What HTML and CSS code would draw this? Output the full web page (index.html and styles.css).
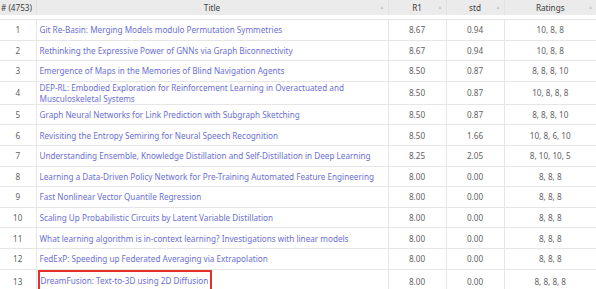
FILE: index.html
```html
<!DOCTYPE html>
<html>
<head>
<meta charset="utf-8">
<link rel="stylesheet" href="styles.css">
</head>
<body>
<table class="grid">
  <colgroup>
    <col class="c-num"><col class="c-title"><col class="c-r1"><col class="c-std"><col class="c-rat">
  </colgroup>
  <thead>
    <tr class="head">
      <th class="h-num">#&nbsp;(4753)</th>
      <th>Title<span class="sort">▲</span></th>
      <th>R1<span class="sort">▲</span></th>
      <th>std<span class="sort">▲</span></th>
      <th>Ratings<span class="sort">▲</span></th>
    </tr>
    <tr class="gap"><td colspan="5"></td></tr>
  </thead>
  <tbody>
    <tr><td>1</td><td class="t"><a>Git Re-Basin: Merging Models modulo Permutation Symmetries</a></td><td>8.67</td><td>0.94</td><td>10, 8, 8</td></tr>
    <tr><td>2</td><td class="t"><a>Rethinking the Expressive Power of GNNs via Graph Biconnectivity</a></td><td>8.67</td><td>0.94</td><td>10, 8, 8</td></tr>
    <tr><td>3</td><td class="t"><a>Emergence of Maps in the Memories of Blind Navigation Agents</a></td><td>8.50</td><td>0.87</td><td>8, 8, 8, 10</td></tr>
    <tr><td>4</td><td class="t"><a>DEP-RL: Embodied Exploration for Reinforcement Learning in Overactuated and Musculoskeletal Systems</a></td><td>8.50</td><td>0.87</td><td>10, 8, 8, 8</td></tr>
    <tr><td>5</td><td class="t"><a>Graph Neural Networks for Link Prediction with Subgraph Sketching</a></td><td>8.50</td><td>0.87</td><td>8, 8, 8, 10</td></tr>
    <tr><td>6</td><td class="t"><a>Revisiting the Entropy Semiring for Neural Speech Recognition</a></td><td>8.50</td><td>1.66</td><td>10, 8, 6, 10</td></tr>
    <tr><td>7</td><td class="t"><a>Understanding Ensemble, Knowledge Distillation and Self-Distillation in Deep Learning</a></td><td>8.25</td><td>2.05</td><td>8, 10, 10, 5</td></tr>
    <tr><td>8</td><td class="t"><a>Learning a Data-Driven Policy Network for Pre-Training Automated Feature Engineering</a></td><td>8.00</td><td>0.00</td><td>8, 8, 8</td></tr>
    <tr><td>9</td><td class="t"><a>Fast Nonlinear Vector Quantile Regression</a></td><td>8.00</td><td>0.00</td><td>8, 8, 8</td></tr>
    <tr><td>10</td><td class="t"><a>Scaling Up Probabilistic Circuits by Latent Variable Distillation</a></td><td>8.00</td><td>0.00</td><td>8, 8, 8</td></tr>
    <tr><td>11</td><td class="t"><a>What learning algorithm is in-context learning? Investigations with linear models</a></td><td>8.00</td><td>0.00</td><td>8, 8, 8</td></tr>
    <tr><td>12</td><td class="t"><a>FedExP: Speeding up Federated Averaging via Extrapolation</a></td><td>8.00</td><td>0.00</td><td>8, 8, 8</td></tr>
    <tr><td>13</td><td class="t hl"><a class="boxed">DreamFusion: Text-to-3D using 2D Diffusion</a></td><td>8.00</td><td>0.00</td><td>8, 8, 8, 8</td></tr>
  </tbody>
</table>
</body>
</html>
```

FILE: styles.css
```css
html, body {
  margin: 0;
  padding: 0;
  background: #ffffff;
}
body {
  font-family: "Noto Sans", "Open Sans", sans-serif;
  font-size: 8.16px;
  color: #5f5f5f;
  overflow: hidden;
}
.grid {
  width: 596px;
  border-collapse: collapse;
  table-layout: fixed;
}
.c-num { width: 36px; }
.c-title { width: 352px; }
.c-r1 { width: 58px; }
.c-std { width: 58px; }
.c-rat { width: 92px; }

.head th {
  background: #ebebeb;
  color: #404040;
  font-weight: 400;
  height: 15px;
  padding: 0 2px;
  line-height: 15px;
  text-align: center;
  position: relative;
  border-left: 1px solid #e2e2e2;
}
.head th:first-child { border-left: none; }
.head .h-num {
  text-align: left;
  padding-left: 1px;
  white-space: nowrap;
}
.sort {
  position: absolute;
  right: 3px;
  top: 0;
  font-size: 5px;
  color: #c8c8c8;
}
.gap td {
  height: 4px;
  padding: 0;
}
tbody tr {
  height: 20.6px;
}
tbody td {
  border: 1px solid #e6e6e6;
  padding: 0 3px;
  line-height: 11px;
  text-align: center;
  vertical-align: middle;
}
tbody tr td:first-child { border-left: none; }
tbody tr td:last-child { border-right: none; }
tbody td.t {
  text-align: left;
  padding-left: 3px;
}
a {
  color: #6b6fd4;
  text-decoration: none;
}
tbody td.hl {
  padding: 0 0 0 1px;
  vertical-align: top;
}
.boxed {
  display: inline-block;
  border: 2px solid #e3302b;
  padding: 3px 2px 6px 1px;
}
```
